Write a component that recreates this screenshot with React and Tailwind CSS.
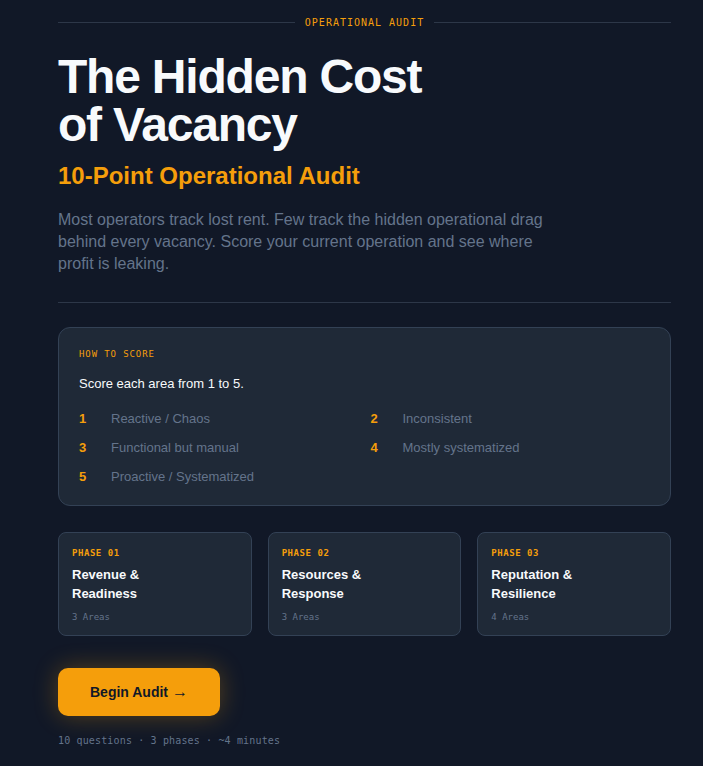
import React from "react";

const mono = { fontFamily: '"DejaVu Sans Mono", "Liberation Mono", monospace' };

const scores = [
  ["1", "Reactive / Chaos"],
  ["2", "Inconsistent"],
  ["3", "Functional but manual"],
  ["4", "Mostly systematized"],
  ["5", "Proactive / Systematized"],
];

const phases = [
  { id: "01", a: "Revenue &", b: "Readiness", areas: "3 Areas" },
  { id: "02", a: "Resources &", b: "Response", areas: "3 Areas" },
  { id: "03", a: "Reputation &", b: "Resilience", areas: "4 Areas" },
];

const App = () => {
  return (
    <div
      className="min-h-[766px] w-full bg-[#111827] pl-[58px] pr-[32px] pt-[15px] pb-6"
      style={{ fontFamily: '"Liberation Sans", Arial, sans-serif' }}
    >
      <div className="flex items-center gap-[10px]">
        <div className="h-px flex-1 bg-[#2d3748]" />
        <span
          className="text-[10px] leading-[15px] tracking-[0.1em] text-[#f59e0b]"
          style={mono}
        >
          OPERATIONAL AUDIT
        </span>
        <div className="h-px flex-1 bg-[#2d3748]" />
      </div>

      <h1 className="mt-[23px] text-[48px] font-bold leading-[48px] tracking-[-0.025em] text-[#f8fafc]">
        The Hidden Cost
        <br />
        of Vacancy
      </h1>
      <h2 className="mt-[11px] text-2xl font-bold text-[#f59e0b]">10-Point Operational Audit</h2>
      <p className="mt-[17px] max-w-lg text-base leading-[22px] text-[#64748b]">
        Most operators track lost rent. Few track the hidden operational drag behind every
        vacancy. Score your current operation and see where profit is leaking.
      </p>

      <div className="mt-[27px] h-px w-full bg-[#2d3748]" />

      <div className="mt-6 rounded-xl border border-[#334155] bg-[#1f2937] px-5 pt-5 pb-[18px]">
        <div className="text-[9px] leading-3 tracking-[0.1em] text-[#f59e0b]" style={mono}>
          HOW TO SCORE
        </div>
        <p className="mt-[14px] text-[13px] leading-5 text-[#f8fafc]">
          Score each area from <span className="font-medium">1 to 5</span>.
        </p>
        <div className="mt-[15px] grid grid-cols-2 gap-x-3 gap-y-[9px]">
          {scores.map(([n, label]) => (
            <div key={n} className="flex items-center text-[13px] leading-5">
              <span className="w-8 font-bold text-[#f59e0b]">{n}</span>
              <span className="text-[#64748b]">{label}</span>
            </div>
          ))}
        </div>
      </div>

      <div className="mt-[26px] grid grid-cols-3 gap-4">
        {phases.map((p) => (
          <div
            key={p.id}
            className="rounded-lg border border-[#334155] bg-[#1f2937] px-[13px] pt-[14px] pb-[12px]"
          >
            <div className="text-[9px] font-bold leading-3 tracking-[0.06em] text-[#f59e0b]" style={mono}>
              PHASE {p.id}
            </div>
            <div className="mt-[6px] text-[13px] font-bold leading-[19px] text-[#f8fafc]">
              {p.a}
              <br />
              {p.b}
            </div>
            <div className="mt-[8px] text-[9px] leading-3 text-[#64748b]" style={mono}>
              {p.areas}
            </div>
          </div>
        ))}
      </div>

      <button className="mt-8 flex h-12 items-center rounded-[10px] bg-[#f59e0b] px-8 text-sm font-bold leading-5 text-[#111827] shadow-[0_0_24px_rgba(245,158,11,0.3)]">
        Begin Audit&nbsp;<span className="text-base leading-none font-normal">→</span>
      </button>

      <p className="mt-[17px] text-[10px] leading-[15px] tracking-[0.015em] text-[#64748b]" style={mono}>
        10 questions · 3 phases · ~4 minutes
      </p>
    </div>
  );
};

export default App;
